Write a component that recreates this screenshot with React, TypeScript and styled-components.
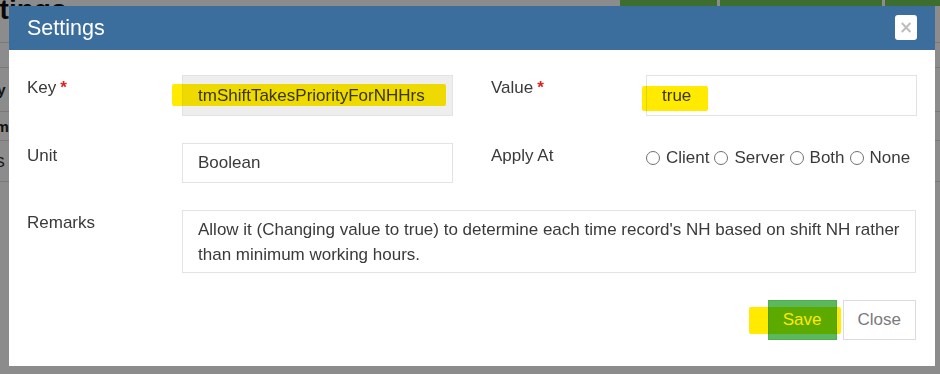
import React from "react";
import styled, { createGlobalStyle } from "styled-components";

const GlobalStyle = createGlobalStyle`
  html, body {
    margin: 0;
    padding: 0;
    width: 940px;
    height: 374px;
    overflow: hidden;
    background: #ffffff;
    font-family: "Liberation Sans", Arial, sans-serif;
  }
`;

const colors = {
  text: "#3a3a3a",
  border: "#e3e3e3",
  header: "#3b6e9d",
  highlight: "#ffea00",
  green: "#5cb85c",
};

/* ---------- page behind the dialog ---------- */

const Page = styled.div`
  margin-left: -44px;
  width: 984px;
`;

const PageHeader = styled.div`
  display: flex;
  align-items: flex-start;
  height: 42px;
  border-bottom: 1px solid #ddd;
`;

const PageTitle = styled.h1`
  margin: -4px 0 0 0;
  font-size: 28px;
  line-height: 28px;
  font-weight: 700;
  color: #111;
  flex: 1;
`;

const Toolbar = styled.div`
  display: flex;
  gap: 3px;
  margin-top: -28px;
`;

const ToolButton = styled.div<{ $w: number }>`
  width: ${(p) => p.$w}px;
  height: 34px;
  background: #72c856;
`;

const Table = styled.div`
  display: flex;
  flex-direction: column;
`;

const TableRow = styled.div<{ $bold?: boolean; $h: number }>`
  height: ${(p) => p.$h}px;
  display: flex;
  align-items: center;
  padding-left: 22px;
  border-bottom: 1px solid #ddd;
  font-size: 15px;
  font-weight: ${(p) => (p.$bold ? 700 : 400)};
  color: #222;
`;

const Backdrop = styled.div`
  position: fixed;
  inset: 0;
  background: rgba(0, 0, 0, 0.45);
`;

/* ---------- dialog ---------- */

const Modal = styled.div`
  position: fixed;
  left: 9px;
  top: 6px;
  width: 926px;
  height: 360px;
  background: #fff;
  display: flex;
  flex-direction: column;
  isolation: isolate;
`;

const ModalHeader = styled.div`
  height: 44px;
  background: ${colors.header};
  display: flex;
  align-items: center;
  justify-content: space-between;
  padding: 0 18px 0 18px;
`;

const ModalTitle = styled.h4`
  margin: 0;
  font-size: 21.5px;
  font-weight: 400;
  color: #fff;
`;

const CloseX = styled.button`
  align-self: flex-start;
  width: 22px;
  height: 25px;
  margin-top: 9px;
  border: none;
  border-radius: 3px;
  background: #fff;
  color: #bdbdbd;
  font-family: "DejaVu Sans", sans-serif;
  font-size: 17px;
  font-weight: 700;
  line-height: 25px;
  padding: 0;
  cursor: pointer;
`;

const ModalBody = styled.div`
  padding: 25px 19px 0 18px;
  display: flex;
  flex-direction: column;
  gap: 27px;
`;

const Row = styled.div`
  display: flex;
  gap: 38px;
`;

const Group = styled.div<{ $wide?: boolean }>`
  display: grid;
  grid-template-columns: ${(p) => (p.$wide ? "155px 1fr" : "155px 271px")};
  flex: ${(p) => (p.$wide ? 1 : "none")};
`;

const Label = styled.label`
  padding-top: 2px;
  font-size: 17px;
  line-height: 22px;
  color: ${colors.text};
`;

const Required = styled.span`
  color: #e02020;
  margin-left: 4px;
  font-weight: 700;
`;

const Field = styled.div`
  position: relative;
`;

const Input = styled.input<{ $grey?: boolean; $tall?: boolean }>`
  box-sizing: border-box;
  width: 100%;
  height: ${(p) => (p.$tall ? 41 : 40)}px;
  padding: 0 15px;
  border: 1px solid ${colors.border};
  background: ${(p) => (p.$grey ? "#eeeeee" : "#fff")};
  font-family: inherit;
  font-size: 17px;
  color: ${colors.text};
  outline: none;
`;

const Remarks = styled.textarea`
  box-sizing: border-box;
  width: 100%;
  height: 63px;
  padding: 6px 10px 6px 15px;
  border: 1px solid ${colors.border};
  font-family: inherit;
  font-size: 17px;
  line-height: 25px;
  color: ${colors.text};
  resize: none;
  outline: none;
  overflow: hidden;
`;

const RadioGroup = styled.div`
  display: flex;
  align-items: center;
  gap: 5px;
  height: 30px;
`;

const RadioOption = styled.label`
  display: flex;
  align-items: center;
  gap: 6px;
  font-size: 17px;
  color: ${colors.text};
`;

const Radio = styled.input`
  appearance: none;
  width: 14px;
  height: 14px;
  margin: 0;
  border: 1px solid #707070;
  border-radius: 50%;
  background: #fff;
`;

const Footer = styled.div`
  display: flex;
  justify-content: flex-end;
  gap: 6px;
`;

const Button = styled.button<{ $primary?: boolean }>`
  position: relative;
  height: 40px;
  padding: 0 14px;
  border: 1px solid ${(p) => (p.$primary ? "#4cae4c" : "#dcdcdc")};
  background: ${(p) => (p.$primary ? colors.green : "#fff")};
  color: ${(p) => (p.$primary ? "#fff" : "#7a7a7a")};
  font-family: inherit;
  font-size: 17px;
  cursor: pointer;
`;

/* marker pen strokes drawn over the screenshot */
const Highlight = styled.span<{
  $left: number;
  $top: number;
  $w: number;
  $h: number;
}>`
  position: absolute;
  left: ${(p) => p.$left}px;
  top: ${(p) => p.$top}px;
  width: ${(p) => p.$w}px;
  height: ${(p) => p.$h}px;
  background: ${colors.highlight};
  mix-blend-mode: multiply;
  pointer-events: none;
  border-radius: 2px;
`;

const applyOptions = ["Client", "Server", "Both", "None"];

export default function App() {
  return (
    <>
      <GlobalStyle />
      <Page>
        <PageHeader>
          <PageTitle>Settings</PageTitle>
          <Toolbar>
            <ToolButton $w={97} />
            <ToolButton $w={162} />
            <ToolButton $w={55} />
          </Toolbar>
        </PageHeader>
        <Table>
          <TableRow $h={24} />
          <TableRow $bold $h={43}>
            Key
          </TableRow>
          <TableRow $bold $h={28}>
            Item
          </TableRow>
          <TableRow $h={40}>tmS</TableRow>
        </Table>
      </Page>
      <Backdrop />
      <Modal>
        <ModalHeader>
          <ModalTitle>Settings</ModalTitle>
          <CloseX>×</CloseX>
        </ModalHeader>
        <ModalBody>
          <Row>
            <Group>
              <Label>
                Key<Required>*</Required>
              </Label>
              <Field>
                <Input $grey $tall readOnly value="tmShiftTakesPriorityForNHHrs" />
                <Highlight $left={-10} $top={9} $w={274} $h={22} />
              </Field>
            </Group>
            <Group>
              <Label>
                Value<Required>*</Required>
              </Label>
              <Field>
                <Input $tall readOnly value="true" />
                <Highlight $left={-4} $top={11} $w={66} $h={25} />
              </Field>
            </Group>
          </Row>
          <Row>
            <Group>
              <Label>Unit</Label>
              <Field>
                <Input readOnly value="Boolean" />
              </Field>
            </Group>
            <Group>
              <Label>Apply At</Label>
              <RadioGroup>
                {applyOptions.map((o) => (
                  <RadioOption key={o}>
                    <Radio type="radio" name="applyAt" />
                    {o}
                  </RadioOption>
                ))}
              </RadioGroup>
            </Group>
          </Row>
          <Group $wide>
            <Label>Remarks</Label>
            <Remarks
              readOnly
              value="Allow it (Changing value to true) to determine each time record's NH based on shift NH rather than minimum working hours."
            />
          </Group>
          <Footer>
            <Button $primary>
              Save
              <Highlight $left={-20} $top={6} $w={92} $h={27} />
            </Button>
            <Button>Close</Button>
          </Footer>
        </ModalBody>
      </Modal>
    </>
  );
}
